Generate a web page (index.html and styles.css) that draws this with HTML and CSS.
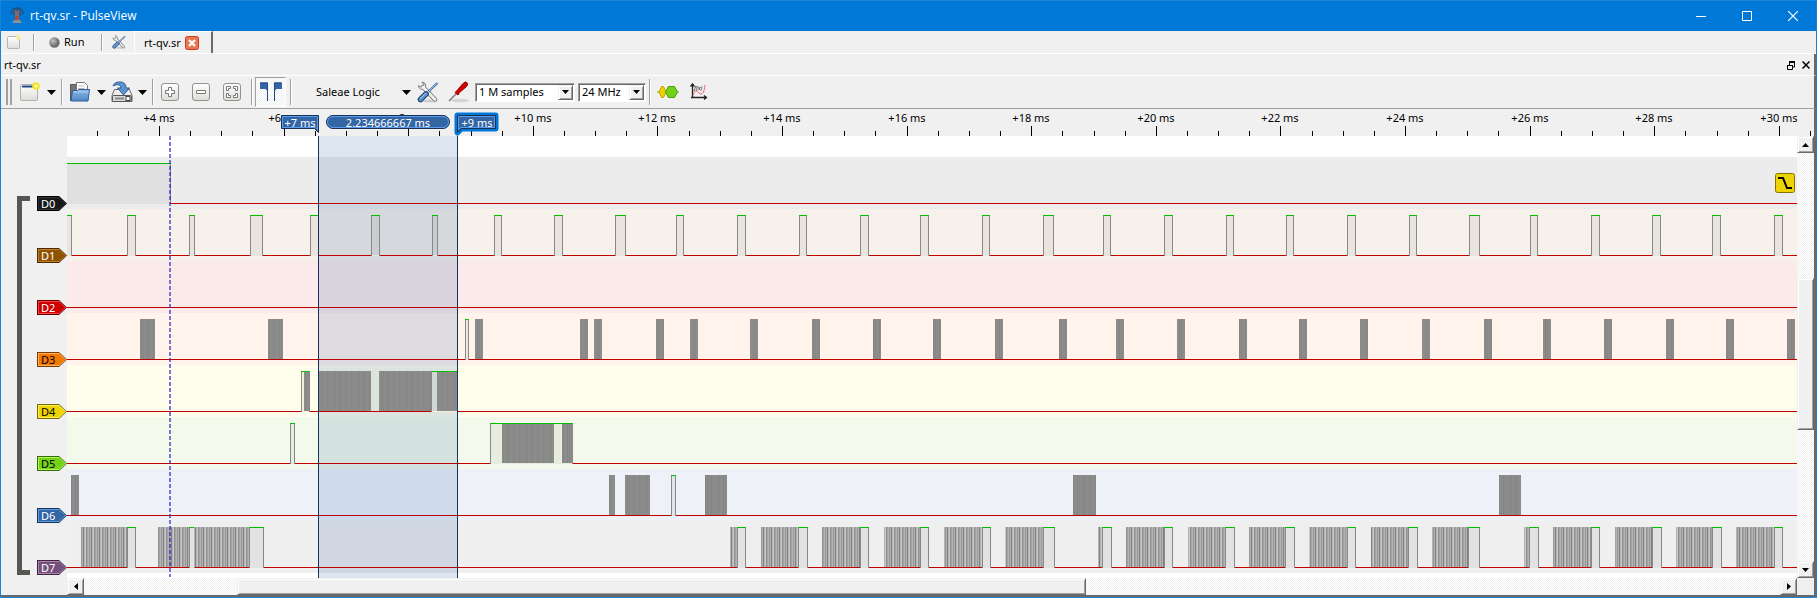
FILE: index.html
```html
<!DOCTYPE html>
<html lang="en">
<head>
<meta charset="utf-8">
<title>rt-qv.sr - PulseView</title>
<link rel="stylesheet" href="styles.css">
</head>
<body>
<svg class="defs" aria-hidden="true">
  <defs>
    <linearGradient id="gBtn" x2="0" y2="1"><stop offset="0" stop-color="#fff"/><stop offset="1" stop-color="#dcdcd8"/></linearGradient>
    <linearGradient id="gBlue" x2="0" y2="1"><stop offset="0" stop-color="#8db8e4"/><stop offset="1" stop-color="#4f88c4"/></linearGradient>
    <radialGradient id="gDot" cx=".35" cy=".35"><stop offset="0" stop-color="#c4c4c4"/><stop offset="1" stop-color="#707070"/></radialGradient>
    <symbol id="tools" viewBox="0 0 22 22">
      <ellipse cx="13" cy="20" rx="8" ry="1.5" fill="#ccc"/>
      <path d="M6 6l12 12.500" stroke="#777" stroke-width="4.500" stroke-linecap="round"/>
      <path d="M1.500 4.500c0 3 2.500 4.500 5 3.500l2-2c.8-2.500-.8-4.800-3.500-4.800L7 3.400 6 5.500 3.700 6z" fill="#eee" stroke="#777"/>
      <path d="M6 6l12 12.500" stroke="#f2f2f0" stroke-width="2.600" stroke-linecap="round"/>
      <path d="M20.500 2L11 11" stroke="#3a6aa8" stroke-width="2.400"/>
      <path d="M20.500 2L11 11" stroke="#b4cfee" stroke-width="1"/>
      <path d="M9 13L3.500 18.500" stroke="#1d3f70" stroke-width="5.600" stroke-linecap="round"/>
      <path d="M9 13L3.500 18.500" stroke="#5b8fc9" stroke-width="3.800" stroke-linecap="round"/>
      <path d="M8.500 12.500L3.500 17.500" stroke="#a8c8ec" stroke-width="1" stroke-linecap="round"/>
    </symbol>
  </defs>
</svg>
<div class="window">
  <header class="titlebar">
    <svg class="logo" width="16" height="18" viewBox="0 0 16 18"><path d="M2 7a6 6 0 0 1 12 0M4.500 8a4 4 0 0 1 7 0" fill="none" stroke="#234a78" stroke-width="1.500"/><path d="M3 3l3 3M13 3l-3 3" stroke="#555" stroke-width="1.500"/><rect x="6" y="4" width="4" height="5" fill="#8a6a72"/><rect x="6" y="9" width="4" height="4" fill="#b84a34"/><path d="M5 13h6l2 3H3z" fill="#8a8f98"/><circle cx="8" cy="3" r="1.500" fill="#3a5878"/></svg>
    <h1>rt-qv.sr - PulseView</h1>
    <div class="winbuttons">
      <button aria-label="Minimize"><svg width="10" height="10"><path d="M0 5.500h10" stroke="#fff"/></svg></button>
      <button aria-label="Maximize"><svg width="10" height="10"><path d="M.5.5h9v9h-9z" stroke="#fff" fill="none"/></svg></button>
      <button aria-label="Close"><svg width="10" height="10"><path d="M0 0l10 10M10 0L0 10" stroke="#fff" stroke-width="1.200"/></svg></button>
    </div>
  </header>

  <nav class="mainbar">
    <button aria-label="New session"><svg width="14" height="14" viewBox="0 0 14 14"><rect x=".5" y="1.500" width="12" height="12" rx="1" fill="url(#gBtn)" stroke="#b4b4b0"/><circle cx="11" cy="2.500" r="2.300" fill="#f4eca0"/></svg></button>
    <i class="sep"></i>
    <button class="run"><svg width="11" height="11"><circle cx="5.500" cy="5.500" r="5.200" fill="url(#gDot)"/></svg>Run</button>
    <i class="sep"></i>
    <button class="settings" aria-label="Settings"><svg width="14" height="14"><use href="#tools"/></svg></button>
    <div class="tab"><span>rt-qv.sr</span><button aria-label="Close tab"><svg width="14" height="14"><rect x=".5" y=".5" width="13" height="13" rx="2" fill="#e8764f" stroke="#cc3b22"/><path d="M4 4l6 6M10 4l-6 6" stroke="#fff" stroke-width="2.200"/></svg></button></div>
  </nav>

  <div class="docktitle">
    <span>rt-qv.sr</span>
    <div class="dockbtns">
      <button aria-label="Float"><svg width="8" height="9"><path d="M2.500 4V1H7.500V6H6" fill="none" stroke="#000"/><path d="M2 1h6" stroke="#000" stroke-width="2"/><path d="M.5 4.500h5v4h-5zM0 4.500h6" fill="none" stroke="#000"/></svg></button>
      <button aria-label="Close view"><svg width="8" height="8"><path d="M.5.5l7 7M7.500.5l-7 7" stroke="#000" stroke-width="1.500"/></svg></button>
    </div>
  </div>

  <div class="toolbar">
    <i class="grip"></i>
    <button class="w28" aria-label="New view"><svg width="20" height="20" viewBox="0 0 20 20"><rect x=".5" y="2.500" width="17" height="16" rx="1.500" fill="url(#gBtn)" stroke="#b0b0ac"/><path d="M2 4.500h13" stroke="#204a87" stroke-width="2"/><circle cx="16" cy="4" r="3.800" fill="#f5e32a"/><circle cx="16" cy="4" r="1.800" fill="#fff799"/></svg></button>
    <button class="drop" aria-label="New view options"><svg width="9" height="5"><path d="M0 0h9L4.500 5z"/></svg></button>
    <i class="sep"></i>
    <button class="w28 open" aria-label="Open"><svg width="22" height="22" viewBox="0 0 22 22"><path d="M1.500 3.500h6l1 2v14h-7z" fill="#75767a" stroke="#54585c"/><path d="M7.500 1.500h8l3 3V13h-11z" fill="#fff" stroke="#777"/><path d="M9.500 5h6M9.500 7.500h6" stroke="#bbb"/><path d="M3.500 9.500h5l1-1h11l-1.500 11.500H2z" fill="url(#gBlue)" stroke="#2d5f9c"/><path d="M4.500 11h15" stroke="#b5d0ee"/></svg></button>
    <button class="drop" aria-label="Open options"><svg width="9" height="5"><path d="M0 0h9L4.500 5z"/></svg></button>
    <button class="w28" aria-label="Save"><svg width="22" height="22" viewBox="0 0 22 22"><path d="M3.500 8.500h15l2.500 6v6H1v-6z" fill="#eee" stroke="#666"/><rect x="1.500" y="14.500" width="19" height="6" rx="1" fill="#d8d8d6" stroke="#555"/><path d="M4 17.500h9" stroke="#888" stroke-width="2"/><rect x="15" y="15.500" width="4" height="4" fill="#fff" stroke="#444"/><path d="M2 5c1-3 4-4.500 8-4 4 .4 5 3 5 6h3.500l-6 7-6-7H10c0-3-3-4.500-8-2z" fill="#5e93cb" stroke="#2d5f9c"/></svg></button>
    <button class="drop" aria-label="Save options"><svg width="9" height="5"><path d="M0 0h9L4.500 5z"/></svg></button>
    <i class="sep"></i>
    <button class="w31" aria-label="Zoom in"><svg width="18" height="18"><rect x=".5" y=".5" width="17" height="17" rx="2.500" fill="url(#gBtn)" stroke="#92928e"/><path d="M7.500 4.500h3v3h3v3h-3v3h-3v-3h-3v-3h3z" fill="#fff" stroke="#777"/></svg></button>
    <button class="w31" aria-label="Zoom out"><svg width="18" height="18"><rect x=".5" y=".5" width="17" height="17" rx="2.500" fill="url(#gBtn)" stroke="#92928e"/><path d="M4.500 7.500h9v3h-9z" fill="#fff" stroke="#777"/></svg></button>
    <button class="w31" aria-label="Zoom to fit"><svg width="18" height="18"><rect x=".5" y=".5" width="17" height="17" rx="2.500" fill="url(#gBtn)" stroke="#92928e"/><path d="M3.500 3.500h4v2h-2v2h-2zM14.500 3.500h-4v2h2v2h2zM3.500 14.500h4v-2h-2v-2h-2zM14.500 14.500h-4v-2h2v-2h2z" fill="#fff" stroke="#777"/></svg></button>
    <i class="sep tight"></i>
    <button class="toggle" aria-label="Show cursors" aria-pressed="true"><svg width="22" height="20" viewBox="0 0 22 20"><path d="M0 .5h8V19H7V8.500L5.500 7H0zM22 .5h-8V19h1V8.500L16.500 7H22z" fill="#3465a4"/><path d="M.5 1h7v18M21.500 1h-7v18" fill="none" stroke="#204a87"/></svg></button>
    <i class="sep"></i>
    <button class="device"><span>Saleae Logic</span><svg width="9" height="5"><path d="M0 0h9L4.500 5z"/></svg></button>
    <button class="w31" aria-label="Configure device"><svg width="22" height="22"><use href="#tools"/></svg></button>
    <button class="w28" aria-label="Configure channels"><svg width="22" height="22" viewBox="0 0 22 22"><ellipse cx="12" cy="19.500" rx="9" ry="1.800" fill="#d4d4d4"/><path d="M1 20L9 12" stroke="#777" stroke-width="1.500"/><path d="M7 11.500l2.500-2.500 5-6L17 1l2 .5.5 2.500L18 6l-6.500 5.500L10 14z" fill="#d40000" stroke="#900"/></svg></button>
    <label class="combo samples"><select aria-label="Sample count"><option>1 M samples</option></select><span><svg width="7" height="4"><path d="M0 0h7L3.500 4z"/></svg></span></label>
    <label class="combo rate"><select aria-label="Sample rate"><option>24 MHz</option></select><span><svg width="7" height="4"><path d="M0 0h7L3.500 4z"/></svg></span></label>
    <i class="sep"></i>
    <button class="w31" aria-label="Add decoder"><svg width="22" height="14" viewBox="0 0 22 14"><path d="M0 7h22" stroke="#73a946"/><path d="M4.500 1.500h2L9 7l-2.500 5.500h-2L2 7z" fill="#edd400" stroke="#c4a000"/><path d="M11.500 1.500h6L20.500 7l-3 5.500h-6L8.500 7z" fill="#73d216" stroke="#4e9a06"/></svg></button>
    <button aria-label="Add math signal"><svg width="18" height="18" viewBox="0 0 18 18"><path d="M2.500 2v12.500M1 14.500h15M.5 3.500l2-2.500 2 2.500M14 12.500l2.500 2-2.500 2" fill="none" stroke="#222" stroke-width="1.300"/><path d="M3 12c2-6 4-4 6-2s5 2 6-8" fill="none" stroke="#e66"/><text x="4" y="7" class="fx">f(x)</text></svg></button>
  </div>

  <main class="view">
    <svg class="ruler" id="ruler" role="img" aria-label="Time ruler"></svg>
    <div class="body">
      <div class="headers">
        <i class="bracket"></i>
        <div class="tags">
          <div class="tag d0"><span>D0</span></div>
          <div class="tag d1"><span>D1</span></div>
          <div class="tag d2"><span>D2</span></div>
          <div class="tag d3"><span>D3</span></div>
          <div class="tag d4"><span>D4</span></div>
          <div class="tag d5"><span>D5</span></div>
          <div class="tag d6"><span>D6</span></div>
          <div class="tag d7"><span>D7</span></div>
        </div>
      </div>
      <div class="plot">
        <svg id="plot" role="img" aria-label="Logic traces D0 to D7"></svg>
        <button class="trigger" aria-label="Falling edge trigger"><svg width="20" height="20"><rect x=".5" y=".5" width="19" height="19" rx="2" fill="#edd400" stroke="#837500"/><path d="M3 5h5l4 10h5" fill="none" stroke="#000" stroke-width="2"/></svg></button>
      </div>
      <div class="vscroll">
        <button aria-label="Scroll up"><svg width="7" height="4"><path d="M0 4h7L3.500 0z"/></svg></button>
        <i class="before"></i><i class="thumb"></i><i class="after"></i>
        <button aria-label="Scroll down"><svg width="7" height="4"><path d="M0 0h7L3.500 4z"/></svg></button>
      </div>
    </div>
    <div class="hscroll">
      <button aria-label="Scroll left"><svg width="4" height="7"><path d="M4 0v7L0 3.500z"/></svg></button>
      <i class="before"></i><i class="thumb"></i><i class="after"></i>
      <button aria-label="Scroll right"><svg width="4" height="7"><path d="M0 0v7L4 3.500z"/></svg></button>
    </div>
  </main>
</div>
<script src="app.js"></script>
</body>
</html>
```
FILE: styles.css
```css
* { box-sizing: border-box; }
body { margin: 0; font: 11px/14px "Noto Sans", "DejaVu Sans", sans-serif; color: #000; background: #f0f0f0; }
button { border: 0; padding: 0; margin: 0; background: none; font: inherit; color: inherit; display: flex; align-items: center; }
svg { display: block; flex: none; }
.defs { position: absolute; width: 0; height: 0; }
.window { height: 100vh; display: flex; flex-direction: column; border: 1px solid #1883d7; background: #f0f0f0; }

.titlebar { height: 30px; flex: none; background: #0078d7; color: #fff; display: flex; align-items: center; gap: 5px; padding-left: 8px; }
.titlebar h1 { margin: 0; font: 12px/16px "Open Sans", "Noto Sans", sans-serif; flex: 1; }
.winbuttons { display: flex; }
.winbuttons button { width: 46px; height: 28px; justify-content: center; }

.mainbar { height: 23px; flex: none; display: flex; align-items: center; padding-left: 6px; border-bottom: 1px solid #fff; }
.mainbar .sep { height: 17px; margin-left: 12px; }
.sep { flex: none; width: 2px; height: 26px; border-left: 1px solid #a0a0a0; border-right: 1px solid #fff; }
.run { gap: 4px; margin-left: 14px; width: 52px; }
.mainbar .run + .sep { margin-left: 0; }
.settings { margin-left: 9px; }
.tab { display: flex; align-items: center; gap: 4px; align-self: stretch; margin-left: 8px; padding: 1px 12px 0 9px; border-left: 1px solid #fff; border-top: 1px solid #fff; border-right: 2px solid #696969; }

.docktitle { height: 22px; flex: none; display: flex; align-items: center; justify-content: space-between; padding: 1px 4px 0 3px; border-bottom: 1px solid #fff; border-right: 2px solid #696969; }
.dockbtns { display: flex; gap: 7px; align-items: center; }

.toolbar { height: 33px; flex: none; display: flex; align-items: center; padding-left: 5px; border-bottom: 1px solid #a0a0a0; border-right: 2px solid #696969; }
.grip { width: 6px; height: 26px; margin-right: 8px; border-left: 2px solid #a0a0a0; border-right: 2px solid #a0a0a0; }
.w28 { width: 27px; }
.w31 { width: 31px; }
.drop { width: 14px; }
.sep + .open { margin-left: 6px; width: 28px; }
.sep + .w31 { margin-left: 7px; }
.tight { margin-left: -3px; }
.toggle { width: 31px; height: 30px; justify-content: center; margin: 0 4px 0 2px; border: 1px solid; border-color: #a0a0a0 #fff #fff #a0a0a0; background: repeating-conic-gradient(#fff 0 25%, #f0f0f0 0 50%) 0 0 / 2px 2px; }
.device { width: 101px; justify-content: space-between; margin-left: 24px; padding-right: 6px; }
.combo { position: relative; height: 19px; margin-right: 3px; display: flex; background: #fff; border: 1px solid; border-color: #a0a0a0 #fff #fff #a0a0a0; box-shadow: inset 1px 1px #696969; }
.combo select { appearance: none; border: 0; background: none; font: inherit; color: #000; width: 100%; padding: 0 0 0 3px; margin: 0; }
.combo span { position: absolute; right: 1px; top: 1px; width: 15px; bottom: 1px; display: flex; align-items: center; justify-content: center; pointer-events: none; }
.samples { width: 100px; }
.rate { width: 68px; }
.combo + .sep + .w31 { margin-left: 6px; width: 33px; }
.fx { font: italic 6px "Noto Sans", sans-serif; }

.combo span, .thumb, .vscroll button, .hscroll button { background: #f0f0f0; border: 1px solid; border-color: #f0f0f0 #696969 #696969 #f0f0f0; box-shadow: inset 1px 1px #fff, inset -1px -1px #a0a0a0; }

.view { flex: 1; min-height: 0; display: flex; flex-direction: column; border-right: 2px solid #696969; border-bottom: 2px solid #696969; }
.ruler { width: 100%; height: 27px; flex: none; overflow: visible; position: relative; z-index: 1; }
.ruler text { font-size: 11px; text-anchor: middle; }
.ruler .on { fill: #fff; }
.body { flex: 1; min-height: 0; display: flex; }
.headers { width: 66px; flex: none; display: flex; padding: 60px 0 3px 16px; }
.bracket { width: 13px; border: 5px solid #555753; border-right: 0; }
.tags { margin-left: 7px; display: flex; flex-direction: column; gap: 37px; }
.tag { position: relative; width: 30px; height: 15px; padding-left: 4px; line-height: 15px; background: var(--edge); clip-path: polygon(0 0, 22px 0, 100% 50%, 22px 100%, 0 100%); color: #fff; }
.tag::before, .tag::after { content: ""; position: absolute; inset: 1px; background: var(--hi); clip-path: polygon(0 0, 21px 0, 100% 50%, 21px 100%, 0 100%); }
.tag::after { inset: 2px; background: var(--fill); clip-path: polygon(0 0, 20px 0, 100% 50%, 20px 100%, 0 100%); }
.tag span { position: relative; z-index: 1; }
.d0 { --edge: #000; --hi: #2e3436; --fill: #16191a; }
.d1 { --edge: #472a01; --hi: #c47e1a; --fill: #8f5202; }
.d2 { --edge: #660000; --hi: #ff4040; --fill: #cc0000; }
.d3 { --edge: #7a3d00; --hi: #ffb060; --fill: #f57900; color: #000; }
.d4 { --edge: #766a00; --hi: #fff060; --fill: #edd400; color: #000; }
.d5 { --edge: #39690b; --hi: #a8ff50; --fill: #73d216; color: #000; }
.d6 { --edge: #1a3252; --hi: #5a9cf0; --fill: #3465a4; }
.d7 { --edge: #3a283d; --hi: #b080b4; --fill: #75507b; }

.plot { flex: 1; min-width: 0; position: relative; background: #fff; }
.plot > svg { width: 100%; height: 100%; }
.trigger { position: absolute; right: 2px; top: 37px; }
.vscroll, .hscroll { display: flex; flex: none; }
.vscroll { width: 17px; flex-direction: column; }
.hscroll { height: 17px; margin: 0 17px 0 66px; }
.vscroll button, .hscroll button { width: 17px; height: 17px; flex: none; justify-content: center; }
.before, .after { background: repeating-conic-gradient(#fff 0 25%, #f0f0f0 0 50%) 0 0 / 2px 2px; }
.vscroll .before { flex: 126; } .vscroll .thumb { flex: 150; } .vscroll .after { flex: 132; }
.hscroll .before { flex: 153; } .hscroll .thumb { flex: 848; } .hscroll .after { flex: 695; }
```
FILE: app.js
```js
// Plot geometry: x values are view pixels measured from the window's left edge.
const LEFT = 67;
const ROW = 52;
const TOP = 21;
const CURSOR_A = 318;
const CURSOR_B = 457;

const GREEN = '#00c000';
const RED = '#c00000';
const GREY = '#888886';

const rect = (x, y, w, h, fill, extra = '') =>
  `<rect x="${x}" y="${y}" width="${w}" height="${h}" fill="${fill}" ${extra}/>`;

// high: [first, last] pulse with edges; dense/loose: [from, to) bursts of toggling.
const channels = [
  { bg: '#ececec', high: [[60, 170]] },
  { bg: '#f6f1ea', high: [[60, 71], [127, 135], [189, 194], [250, 262], [310, 318], [371, 379], [432, 437], [494, 501], [554, 562], [615, 625], [676, 683], [737, 745], [799, 806], [860, 868], [920, 928], [982, 989], [1043, 1053], [1103, 1110], [1164, 1172], [1226, 1233], [1286, 1293], [1347, 1355], [1409, 1416], [1469, 1479], [1530, 1537], [1591, 1599], [1652, 1660], [1712, 1720], [1774, 1782]] },
  { bg: '#fbeaea' },
  { bg: '#fff3eb', high: [[465, 468]], dense: [[140, 155], [268, 283], [475, 483], [580, 588], [594, 602], [656, 664], [690, 698], [750, 758], [812, 820], [873, 881], [933, 941], [995, 1003], [1059, 1067], [1116, 1124], [1177, 1185], [1239, 1247], [1299, 1307], [1360, 1368], [1422, 1430], [1484, 1492], [1543, 1551], [1604, 1612], [1666, 1674], [1726, 1734], [1787, 1795]] },
  { bg: '#fffdeb', high: [[301, 309], [431, 457]], dense: [[304, 310], [319, 371], [379, 432], [437, 457]] },
  { bg: '#f3faeb', high: [[290, 294], [490, 572]], dense: [[502, 554], [562, 572]] },
  { bg: '#eef2f8', high: [[671, 675]], dense: [[71, 79], [609, 615], [625, 650], [705, 727], [1073, 1096], [1499, 1521]] },
  { bg: '#f0efef', high: [[127, 135], [189, 194], [249, 263], [737, 745], [798, 807], [860, 868], [920, 928], [982, 990], [1043, 1054], [1102, 1111], [1164, 1172], [1225, 1234], [1285, 1294], [1347, 1355], [1408, 1417], [1468, 1479], [1529, 1538], [1591, 1599], [1652, 1661], [1712, 1721], [1774, 1782]],
    loose: [[81, 127], [158, 189], [194, 249], [730, 737], [761, 798], [822, 860], [884, 920], [944, 982], [1005, 1043], [1098, 1102], [1126, 1164], [1188, 1225], [1249, 1285], [1309, 1347], [1371, 1408], [1432, 1468], [1524, 1529], [1553, 1591], [1615, 1652], [1676, 1712], [1736, 1774]] }
];

let out = `<defs>
  <pattern id="dense" width="6" height="40" patternUnits="userSpaceOnUse">
    <rect width="6" height="40" fill="#8c8c8a"/><rect x="2" width="1" height="40" fill="#848484"/><rect x="4" width="1" height="40" fill="#868686"/>
  </pattern>
  <pattern id="loose" width="8" height="40" patternUnits="userSpaceOnUse">
    <rect width="8" height="40" fill="#b4b4b4"/><rect width="1" height="40" fill="#808080"/><rect x="3" width="1" height="40" fill="#909090"/><rect x="4" width="1" height="40" fill="#a4a4a4"/><rect x="6" width="1" height="40" fill="#989898"/><rect x="2" width="1" height="40" fill="#c8c8c8"/>
  </pattern></defs><g shape-rendering="crispEdges">`;

channels.forEach((c, i) => { out += rect(0, TOP + i * ROW, '100%', ROW, c.bg); });
out += rect(CURSOR_A - LEFT, 0, CURSOR_B - CURSOR_A, '100%', '#3465a4', 'fill-opacity=".17"');

channels.forEach((c, i) => {
  const hi = TOP + i * ROW + 6;
  const lo = hi + 40;
  out += rect(0, lo, '100%', 1, RED);
  for (const [a, b] of c.high || []) {
    const x = a - LEFT;
    const w = b - a + 1;
    out += rect(x + 1, lo, w - 2, 1, c.bg);
    out += rect(x, hi, w, 41, '#000', 'fill-opacity=".05"');
    out += rect(x, hi, 1, 41, GREY) + rect(x + w - 1, hi, 1, 41, GREY);
    out += rect(x, hi, w, 1, GREEN);
  }
  for (const kind of ['dense', 'loose']) {
    for (const [a, b] of c[kind] || []) {
      // Bursts inside a high stretch leave its green top line visible.
      const under = (c.high || []).some(([h, e]) => h < a && e >= b - 1);
      out += rect(a - LEFT, hi + (under ? 1 : 0), b - a, under ? 39 : 40, `url(#${kind})`);
    }
  }
});

out += rect(CURSOR_A - LEFT, 0, 1, '100%', '#16325a') + rect(CURSOR_B - LEFT, 0, 1, '100%', '#16325a');
out += '<path d="M103 0V441" stroke="#2020c0" stroke-opacity=".6" stroke-width="2" stroke-dasharray="4 2"/></g>';
document.getElementById('plot').innerHTML = out;

// Ruler: a labelled tick every 2 ms, a short one every 0.5 ms.
const X4 = 158;
const STEP = 124.6;
let ticks = '<g shape-rendering="crispEdges">';
let labels = '';
for (let k = -2; k <= 53; k++) {
  const x = Math.round(X4 + k * STEP / 4);
  const major = k % 4 === 0;
  ticks += rect(x, major ? 17 : 22, 1, major ? 10 : 5, '#000');
  if (major) labels += `<text x="${x}" y="13">+${4 + k / 2} ms</text>`;
}
ticks += '</g>';
const marks = `
  <path d="M280.500 6.500h37v17l-4-4h-33z" fill="#3465a4" stroke="#1a3252"/>
  <path d="M281.500 7.500h35v13l-2-2h-33z" fill="none" stroke="#5a9cf0"/>
  <text class="on" x="299" y="18">+7 ms</text>
  <rect x="325.500" y="6.500" width="123" height="13" rx="6.500" fill="#3465a4" stroke="#1a3252"/>
  <rect x="326.500" y="7.500" width="121" height="11" rx="5.500" fill="none" stroke="#5a9cf0"/>
  <text class="on" x="387" y="18">2.234666667 ms</text>
  <path d="M456.500 6.500h38v13h-34l-4 4z" fill="none" stroke="#0078d7" stroke-width="6" stroke-linejoin="round"/>
  <path d="M456.500 6.500h38v13h-34l-4 4z" fill="#3465a4" stroke="#1a3252"/>
  <path d="M457.500 7.500h36v11h-34l-2 2z" fill="none" stroke="#5a9cf0"/>
  <text class="on" x="476" y="18">+9 ms</text>`;
document.getElementById('ruler').innerHTML = ticks + labels + marks;
```
